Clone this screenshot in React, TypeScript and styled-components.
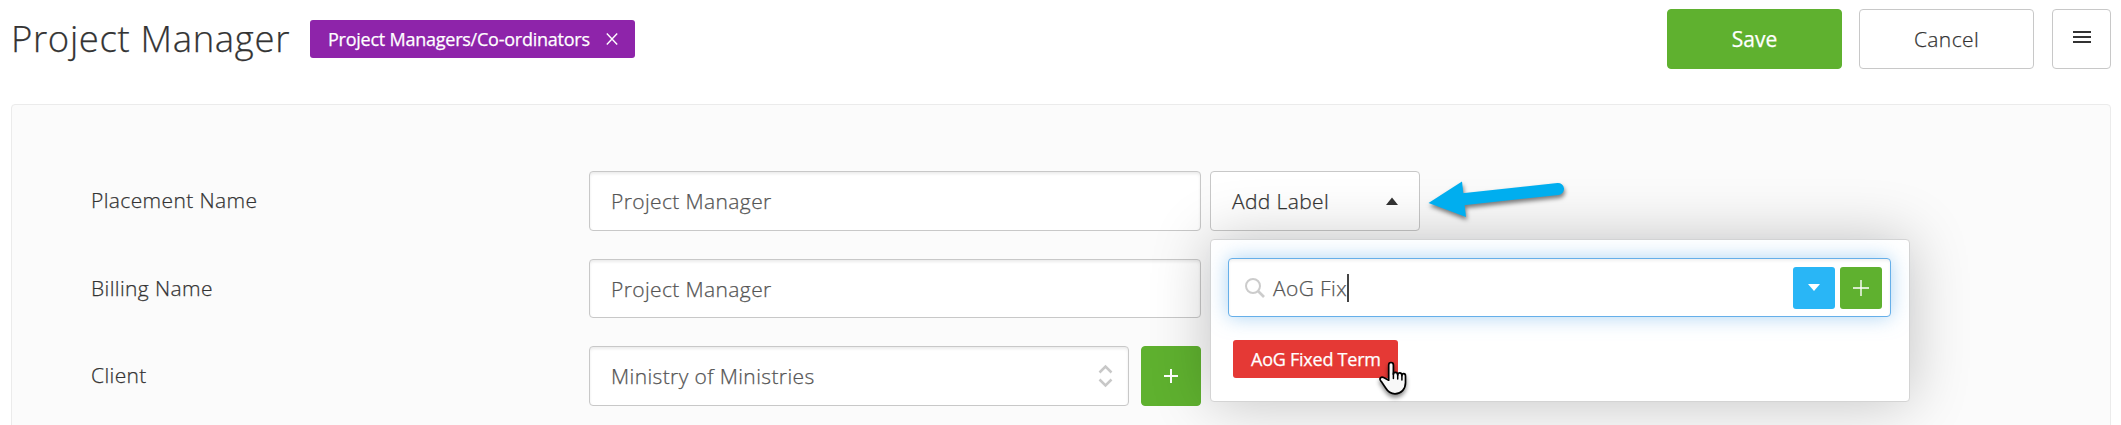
import React from "react";
import styled, { createGlobalStyle } from "styled-components";

const GlobalStyle = createGlobalStyle`
  *, *::before, *::after { box-sizing: border-box; }
  body {
    margin: 0;
    background: #fff;
    font-family: "Open Sans", "Noto Sans", sans-serif;
    font-weight: 300;
    letter-spacing: 0.38px;
    -webkit-text-stroke: 0.25px currentColor;
    color: #333;
  }
  svg { display: block; flex: none; }
`;

const Page = styled.div`
  height: 425px;
  overflow: hidden;
  padding: 9px 10px 0 11px;
`;

const Header = styled.header`
  display: flex;
  align-items: flex-start;
  height: 95px;
`;

const Title = styled.h1`
  margin: 0;
  width: 299px;
  font-size: 36.5px;
  line-height: 58px;
  font-weight: 300;
  letter-spacing: 0.65px;
  white-space: nowrap;
`;

const Tag = styled.span<{ $bg: string; $width: number }>`
  display: flex;
  align-items: center;
  justify-content: space-between;
  width: ${(p) => p.$width}px;
  height: 38px;
  padding: 0 17px 0 18px;
  border-radius: 3px;
  background: ${(p) => p.$bg};
  color: #fff;
  font-size: 18px;
  font-weight: 400;
  letter-spacing: -0.24px;
  white-space: nowrap;
`;

const HeaderTag = styled.div`
  margin-top: 11px;
`;

const Actions = styled.div`
  display: flex;
  margin-left: auto;
`;

const Button = styled.button<{ $primary?: boolean; $width: number; $gap?: number }>`
  display: flex;
  align-items: center;
  justify-content: center;
  width: ${(p) => p.$width}px;
  height: 60px;
  margin: 0 0 0 ${(p) => p.$gap ?? 0}px;
  padding: 0;
  border: 1px solid ${(p) => (p.$primary ? "#5fb12f" : "#c8c8c8")};
  border-radius: 4px;
  background: ${(p) => (p.$primary ? "#5fb12f" : "#fff")};
  color: ${(p) => (p.$primary ? "#fff" : "#333")};
  font: ${(p) => (p.$primary ? 400 : 300)} 21px "Open Sans", sans-serif;
  letter-spacing: ${(p) => (p.$primary ? 0 : 0.38)}px;
`;

const Panel = styled.main`
  height: 400px;
  padding: 66px 0 0 79px;
  border: 1px solid #ebebeb;
  border-radius: 4px;
  background: #fbfbfb;
`;

const Row = styled.div`
  display: flex;
  margin-bottom: 28px;
`;

const Label = styled.label`
  width: 498px;
  font-size: 21px;
  line-height: 58px;
`;

const Field = styled.div<{ $width: number; $height?: number }>`
  display: flex;
  align-items: center;
  justify-content: space-between;
  width: ${(p) => p.$width}px;
  height: ${(p) => p.$height ?? 60}px;
  padding: 0 15px 0 21px;
  border: 1px solid #c8c8c8;
  border-radius: 4px;
  background: #fff;
  box-shadow: inset 0 2px 3px rgba(0, 0, 0, 0.08);
  color: #555;
  font-size: 21px;
`;

const LabelPicker = styled.div`
  position: relative;
  margin-left: 9px;
`;

const PickerToggle = styled.div`
  display: flex;
  align-items: center;
  justify-content: space-between;
  width: 210px;
  height: 60px;
  padding: 0 21px;
  border: 1px solid #c8c8c8;
  border-radius: 4px;
  background: #fff;
  font-size: 21px;
`;

const Pointer = styled.svg`
  position: absolute;
  z-index: 3;
  left: 210px;
  top: 0;
  overflow: visible;
  filter: drop-shadow(1px 3px 2px rgba(0, 0, 0, 0.5));
`;

const Menu = styled.div`
  position: absolute;
  z-index: 2;
  top: 68px;
  left: 0;
  width: 700px;
  height: 163px;
  padding: 18px 17px;
  border: 1px solid #d4d4d4;
  border-radius: 4px;
  background: #fff;
  box-shadow: 0 0 60px rgba(0, 0, 0, 0.23);
`;

const Search = styled.div`
  display: flex;
  align-items: center;
  width: 663px;
  height: 59px;
  padding: 0 8px 0 16px;
  border: 1px solid #66afe9;
  border-radius: 4px;
  background: #fff;
  box-shadow: inset 0 2px 3px rgba(0, 0, 0, 0.06), 0 0 20px rgba(102, 175, 233, 0.55);
  color: #555;
  font-size: 21px;
`;

const Query = styled.span`
  margin-left: 8px;
`;

const Caret = styled.span`
  width: 2px;
  height: 28px;
  background: #444;
`;

const SearchActions = styled.div`
  display: flex;
  gap: 5px;
  margin-left: auto;
`;

const SquareButton = styled.span<{ $bg: string }>`
  display: flex;
  align-items: center;
  justify-content: center;
  width: 42px;
  height: 42px;
  border-radius: 3px;
  background: ${(p) => p.$bg};
`;

const Results = styled.div`
  position: relative;
  margin: 23px 0 0 5px;
`;

const Cursor = styled.svg`
  position: absolute;
  left: 145px;
  top: 21px;
  overflow: visible;
  filter: drop-shadow(0 3px 2px rgba(0, 0, 0, 0.45));
`;

const Plus = ({ size, stroke }: { size: number; stroke: number }) => (
  <svg width={size} height={size} viewBox={`0 0 ${size} ${size}`}>
    <path d={`M0 ${size / 2}H${size}M${size / 2} 0V${size}`} stroke="#fff" strokeWidth={stroke} />
  </svg>
);

export default function App() {
  return (
    <>
      <GlobalStyle />
      <Page>
        <Header>
          <Title>Project Manager</Title>
          <HeaderTag>
            <Tag $bg="#8e24aa" $width={325}>
              Project Managers/Co-ordinators
              <svg width="12" height="12" viewBox="0 0 12 12">
                <path d="M.8.5 11.2 11.5M11.2.5.8 11.5" stroke="#fff" strokeWidth="1.4" />
              </svg>
            </Tag>
          </HeaderTag>
          <Actions>
            <Button $primary $width={175}>Save</Button>
            <Button $width={175} $gap={17}>Cancel</Button>
            <Button $width={59} $gap={18} aria-label="Menu">
              <svg width="18" height="18" viewBox="0 0 18 18">
                <path d="M0 2h18M0 7h18M0 12h18" stroke="#333" strokeWidth="2" />
              </svg>
            </Button>
          </Actions>
        </Header>
        <Panel>
          <Row>
            <Label>Placement Name</Label>
            <Field $width={612}>Project Manager</Field>
            <LabelPicker>
              <PickerToggle>
                Add Label
                <svg width="12" height="8" viewBox="0 0 12 8">
                  <path d="M0 8 6 .5 12 8Z" fill="#333" />
                </svg>
              </PickerToggle>
              <Pointer width="150" height="60" viewBox="0 0 150 60">
                <path d="M43 28.300 138 18" stroke="#00aeef" strokeWidth="12" strokeLinecap="round" />
                <path d="M8.500 32 42 10.500 46 46Z" fill="#00aeef" />
              </Pointer>
              <Menu>
                <Search>
                  <svg width="20" height="20" viewBox="0 0 20 20" fill="none" stroke="#ccc" strokeWidth="2">
                    <circle cx="8" cy="8" r="7" />
                    <path d="m13 13 6 6" strokeWidth="2.6" />
                  </svg>
                  <Query>AoG Fix</Query>
                  <Caret />
                  <SearchActions>
                    <SquareButton $bg="#29b6f6">
                      <svg width="12" height="7" viewBox="0 0 12 7">
                        <path d="M0 0h12L6 7Z" fill="#fff" />
                      </svg>
                    </SquareButton>
                    <SquareButton $bg="#5fb12f">
                      <Plus size={16} stroke={1.4} />
                    </SquareButton>
                  </SearchActions>
                </Search>
                <Results>
                  <Tag $bg="#e53935" $width={165}>AoG Fixed Term</Tag>
                  <Cursor width="29" height="34" viewBox="0 0 29 34">
                    <path
                      d="M13 1.5c-1.7 0-2.3 1-2.3 2.5v15.2L5.6 16.6c-1.7-.9-3.3-.1-3.6 1.1-.3 1.3.4 1.9 1.3 2.9l4.2 6.1c2 3.3 5 6.1 9.500 6.100 6.300 0 10.500-4.600 10.500-11v-6.800c0-3-3.600-3-3.600-.4 0-3.500-4.200-3.400-4.200-.7 0-3.300-4.300-3.200-4.300-.6V4c0-1.600-.7-2.500-2.400-2.500Z"
                      fill="#f8f8f8"
                      stroke="#000"
                      strokeWidth="1.7"
                      strokeLinejoin="round"
                    />
                    <path d="M15.4 12v5.5M19.700 13v5M23.900 14.500V19" stroke="#000" strokeWidth="1.5" strokeLinecap="round" />
                  </Cursor>
                </Results>
              </Menu>
            </LabelPicker>
          </Row>
          <Row>
            <Label>Billing Name</Label>
            <Field $width={612} $height={59}>Project Manager</Field>
          </Row>
          <Row>
            <Label>Client</Label>
            <Field $width={540}>
              Ministry of Ministries
              <svg width="15" height="24" viewBox="0 0 15 24">
                <path d="m1.5 8.5 6-6 6 6M1.5 15.5l6 6 6-6" fill="none" stroke="#c8c8c8" strokeWidth="2.5" />
              </svg>
            </Field>
            <Button $primary $width={60} $gap={12} aria-label="Add client">
              <Plus size={14} stroke={2} />
            </Button>
          </Row>
        </Panel>
      </Page>
    </>
  );
}
